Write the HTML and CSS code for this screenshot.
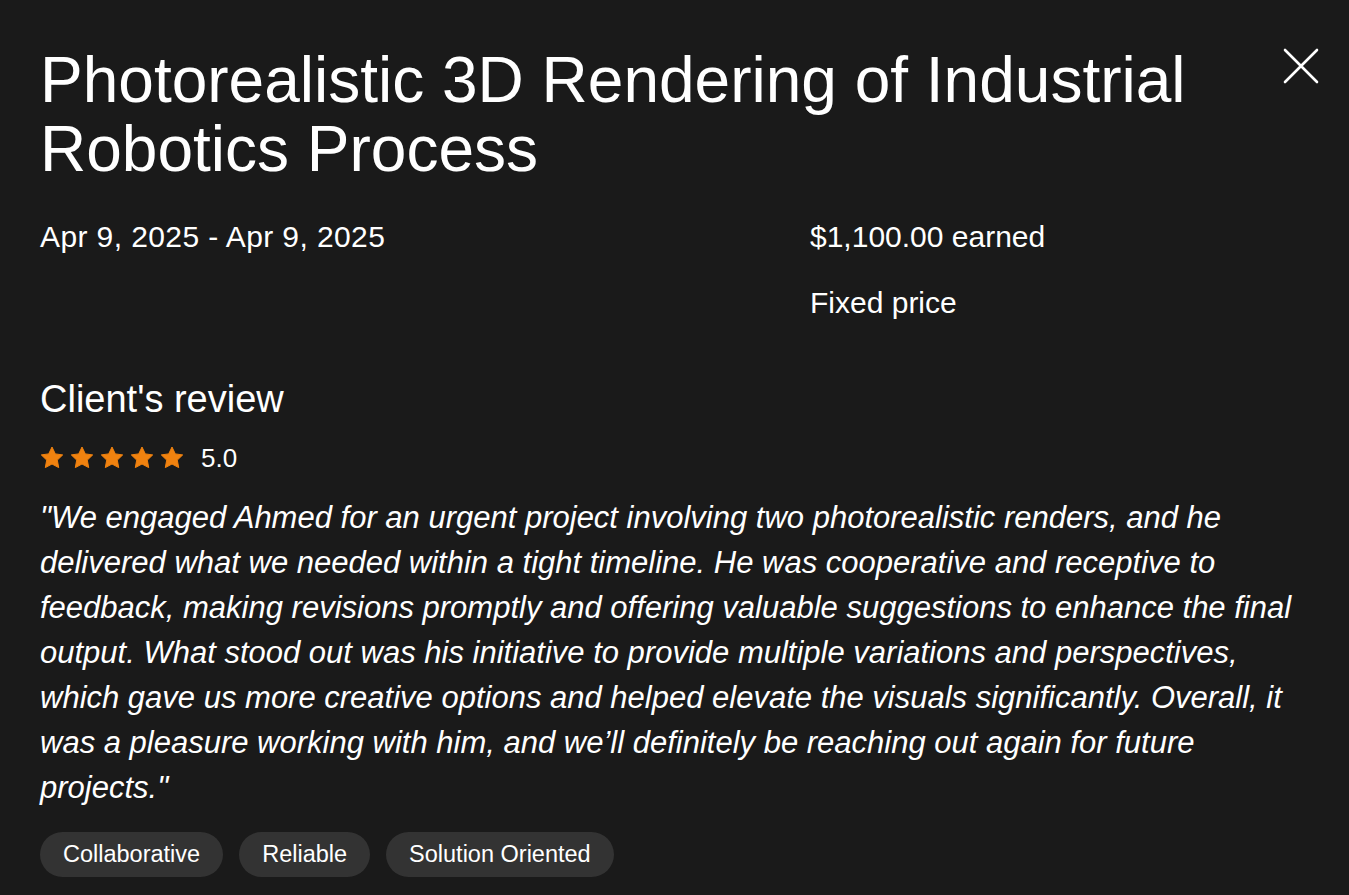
FILE: index.html
```html
<!DOCTYPE html>
<html lang="en">
<head>
<meta charset="utf-8">
<title>Project details</title>
<link rel="stylesheet" href="styles.css">
</head>
<body>
<main class="modal">
  <header class="modal-head">
    <h1 class="title">Photorealistic 3D Rendering of Industrial Robotics Process</h1>
    <button class="close" aria-label="Close">
      <svg width="36" height="36" viewBox="0 0 36 36"><path d="M2 2L34 34M34 2L2 34" stroke="#fff" stroke-width="2.6" stroke-linecap="round" fill="none"/></svg>
    </button>
  </header>
  <section class="meta">
    <div class="dates">Apr 9, 2025 - Apr 9, 2025</div>
    <div class="money">
      <div>$1,100.00 earned</div>
      <div>Fixed price</div>
    </div>
  </section>
  <section class="review">
    <h2 class="review-title">Client's review</h2>
    <div class="rating">
      <div class="stars">
        <svg viewBox="0 0 24 24" class="star"><path d="M12 1l3.3 6.9 7.4 1-5.4 5.2 1.4 7.5L12 18l-6.7 3.6 1.4-7.5-5.4-5.2 7.4-1z" stroke-linejoin="round"/></svg>
        <svg viewBox="0 0 24 24" class="star"><path d="M12 1l3.3 6.9 7.4 1-5.4 5.2 1.4 7.5L12 18l-6.7 3.6 1.4-7.5-5.4-5.2 7.4-1z" stroke-linejoin="round"/></svg>
        <svg viewBox="0 0 24 24" class="star"><path d="M12 1l3.3 6.9 7.4 1-5.4 5.2 1.4 7.5L12 18l-6.7 3.6 1.4-7.5-5.4-5.2 7.4-1z" stroke-linejoin="round"/></svg>
        <svg viewBox="0 0 24 24" class="star"><path d="M12 1l3.3 6.9 7.4 1-5.4 5.2 1.4 7.5L12 18l-6.7 3.6 1.4-7.5-5.4-5.2 7.4-1z" stroke-linejoin="round"/></svg>
        <svg viewBox="0 0 24 24" class="star"><path d="M12 1l3.3 6.9 7.4 1-5.4 5.2 1.4 7.5L12 18l-6.7 3.6 1.4-7.5-5.4-5.2 7.4-1z" stroke-linejoin="round"/></svg>
      </div>
      <span class="score">5.0</span>
    </div>
    <p class="quote">"We engaged Ahmed for an urgent project involving two photorealistic renders, and he delivered what we needed within a tight timeline. He was cooperative and receptive to feedback, making revisions promptly and offering valuable suggestions to enhance the final output. What stood out was his initiative to provide multiple variations and perspectives, which gave us more creative options and helped elevate the visuals significantly. Overall, it was a pleasure working with him, and we’ll definitely be reaching out again for future projects."</p>
    <ul class="tags">
      <li class="tag">Collaborative</li>
      <li class="tag">Reliable</li>
      <li class="tag">Solution Oriented</li>
    </ul>
  </section>
</main>
</body>
</html>
```
FILE: styles.css
```css
html, body {
  margin: 0;
  padding: 0;
  background: #1a1a1a;
  color: #ffffff;
  font-family: "Liberation Sans", Arial, sans-serif;
}
.modal {
  padding: 46px 40px 0 40px;
  height: 895px;
  box-sizing: border-box;
  overflow: hidden;
}
.modal-head {
  display: flex;
  justify-content: space-between;
  align-items: flex-start;
}
.title {
  margin: 0;
  font-size: 64px;
  line-height: 69px;
  font-weight: 400;
  max-width: 1200px;
}
.close {
  background: none;
  border: 0;
  padding: 0;
  margin: 2px -10px 0 0;
  cursor: pointer;
  line-height: 0;
}
.meta {
  display: grid;
  grid-template-columns: 770px 1fr;
  margin-top: 35px;
  font-size: 30px;
  line-height: 36px;
}
.dates {
  letter-spacing: 0.4px;
}
.money {
  display: flex;
  flex-direction: column;
  gap: 30px;
}
.review {
  margin-top: 56px;
}
.review-title {
  margin: 0;
  font-size: 38px;
  line-height: 44px;
  font-weight: 400;
}
.rating {
  display: flex;
  align-items: center;
  gap: 17px;
  height: 30px;
  margin-top: 22px;
}
.stars {
  display: flex;
  gap: 6px;
}
.star {
  width: 24px;
  height: 24px;
  fill: #f0820f;
  stroke: #f0820f;
  stroke-width: 1;
}
.score {
  font-size: 26px;
  line-height: 30px;
}
.quote {
  margin: 22px 0 0 0;
  font-style: italic;
  font-size: 31px;
  line-height: 45px;
  max-width: 1269px;
}
.tags {
  display: flex;
  gap: 16px;
  list-style: none;
  margin: 22px 0 0 0;
  padding: 0;
}
.tag {
  background: #333333;
  border-radius: 23px;
  padding: 0 23px;
  height: 45px;
  line-height: 45px;
  font-size: 23.5px;
}
```
